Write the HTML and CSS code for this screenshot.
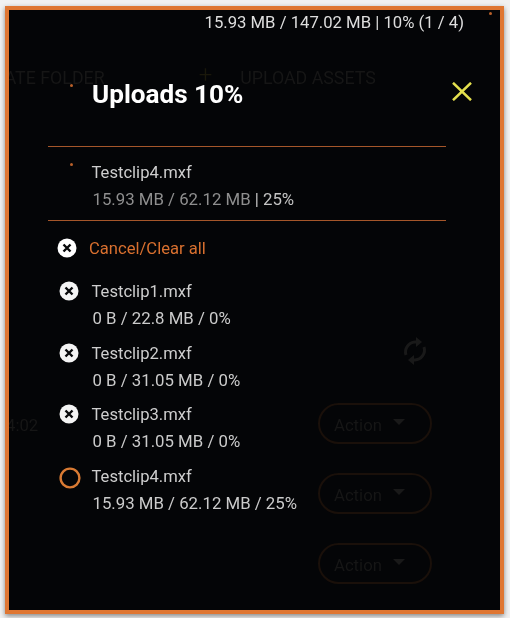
FILE: index.html
```html
<!DOCTYPE html>
<html lang="en">
<head>
<meta charset="utf-8">
<title>Uploads</title>
<link rel="stylesheet" href="styles.css">
</head>
<body>
<div class="frame">
  <div class="backdrop">
    <div class="bd-toolbar">
      <span class="bd-folder">CREATE FOLDER</span>
      <span class="bd-plus">+</span>
      <span class="bd-upload">UPLOAD ASSETS</span>
    </div>
    <div class="bd-refresh">
      <svg width="26" height="30" viewBox="0 0 26 30" fill="none" stroke="#191919" stroke-width="3">
        <path d="M4 19a10 10 0 0 1 9-13h3"/><path d="M22 11a10 10 0 0 1-9 13h-3"/>
        <path d="M14 1l6 5-6 5z" fill="#191919" stroke="none"/><path d="M12 19l-6 5 6 5z" fill="#191919" stroke="none"/>
      </svg>
    </div>
    <div class="bd-row"><span class="bd-time">4:02</span><span class="bd-action">Action<i class="bd-caret"></i></span></div>
    <div class="bd-row"><span class="bd-time"></span><span class="bd-action">Action<i class="bd-caret"></i></span></div>
    <div class="bd-row"><span class="bd-time"></span><span class="bd-action">Action<i class="bd-caret"></i></span></div>
  </div>

  <div class="overlay">
    <div class="status">15.93 MB / 147.02 MB | 10% (1 / 4)</div>
    <div class="header">
      <h1 class="title">Uploads 10%</h1>
      <svg class="close" width="20" height="19" viewBox="0 0 20 19" fill="none" stroke="#e4e04e" stroke-width="2.5">
        <path d="M1 .8l18 17.4M19 .8L1 18.2"/>
      </svg>
    </div>
    <div class="panel">
      <div class="current">
        <div class="name">Testclip4.mxf</div>
        <div class="sub dim">15.93 MB / 62.12 MB <span class="bright">| 25%</span></div>
      </div>
      <div class="cancel">
        <svg class="x-icon" width="20" height="20" viewBox="0 0 20 20"><circle cx="10" cy="10" r="9.5" fill="#fff"/><path d="M6.5 6.5l7 7M13.5 6.5l-7 7" stroke="#08090b" stroke-width="2.4"/></svg>
        <span class="cancel-text">Cancel/Clear all</span>
      </div>
      <div class="list">
        <div class="row">
          <svg class="row-icon" width="20" height="20" viewBox="0 0 20 20"><circle cx="10" cy="10" r="9.5" fill="#f4f4f4"/><path d="M6.5 6.5l7 7M13.5 6.5l-7 7" stroke="#08090b" stroke-width="2.4"/></svg>
          <div><div class="name">Testclip1.mxf</div><div class="sub">0 B / 22.8 MB / 0%</div></div>
        </div>
        <div class="row">
          <svg class="row-icon" width="20" height="20" viewBox="0 0 20 20"><circle cx="10" cy="10" r="9.5" fill="#f4f4f4"/><path d="M6.5 6.5l7 7M13.5 6.5l-7 7" stroke="#08090b" stroke-width="2.4"/></svg>
          <div><div class="name">Testclip2.mxf</div><div class="sub">0 B / 31.05 MB / 0%</div></div>
        </div>
        <div class="row">
          <svg class="row-icon" width="20" height="20" viewBox="0 0 20 20"><circle cx="10" cy="10" r="9.5" fill="#f4f4f4"/><path d="M6.5 6.5l7 7M13.5 6.5l-7 7" stroke="#08090b" stroke-width="2.4"/></svg>
          <div><div class="name">Testclip3.mxf</div><div class="sub">0 B / 31.05 MB / 0%</div></div>
        </div>
        <div class="row">
          <svg class="row-icon ring" width="22" height="22" viewBox="0 0 22 22"><circle cx="11" cy="11" r="9.4" fill="none" stroke="#d97a33" stroke-width="2.4"/></svg>
          <div><div class="name">Testclip4.mxf</div><div class="sub">15.93 MB / 62.12 MB / 25%</div></div>
        </div>
      </div>
    </div>
    <i class="dot dot-a"></i>
    <i class="dot dot-b"></i>
    <i class="dot dot-c"></i>
  </div>
</div>
</body>
</html>
```
FILE: styles.css
```css
* { box-sizing: border-box; }
html, body { margin: 0; padding: 0; }
body {
  width: 510px;
  height: 618px;
  overflow: hidden;
  background: #f1f1f1;
  font-family: Roboto, "Liberation Sans", sans-serif;
  padding: 6px 0 0 5px;
}
.frame {
  position: relative;
  width: 499px;
  height: 608px;
  border: 4px solid #df7632;
  background: #040507;
  box-shadow: 0 2px 5px rgba(0, 0, 0, .45);
  overflow: hidden;
  filter: blur(.4px);
}

/* dimmed page behind the dialog */
.backdrop { color: #161616; font-size: 16.7px; height: 100%; }
.bd-toolbar {
  display: flex;
  align-items: center;
  height: 24px;
  margin: 55px 0 0 -37px;
  white-space: nowrap;
  font-size: 17.8px;
}
.bd-plus { margin-left: 94px; font-size: 24px; font-weight: 300; color: #1a180b; position: relative; top: -2px; }
.bd-upload { margin-left: 28px; }
.bd-refresh { display: flex; justify-content: flex-end; margin: 247px 72px 0 0; height: 30px; }
.bd-row {
  display: flex;
  justify-content: space-between;
  align-items: center;
  height: 41px;
  margin-bottom: 29px;
  padding-right: 68px;
}
.bd-refresh + .bd-row { margin-top: 37px; }
.bd-time { margin: 4px 0 0 -3px; }
.bd-action {
  display: flex;
  align-items: center;
  width: 114px;
  height: 41px;
  padding: 4px 0 0 14px;
  border: 2px solid #1a100a;
  border-radius: 21px;
}
.bd-caret {
  width: 0;
  height: 0;
  margin: -7px 0 0 11px;
  border: 6px solid transparent;
  border-top: 6px solid #191919;
  border-bottom: 0;
}

/* upload dialog */
.overlay { position: absolute; inset: 0; color: #cecece; }
.status {
  height: 26px;
  line-height: 26px;
  padding-right: 36px;
  text-align: right;
  font-size: 16.7px;
  color: #dedede;
}
.header {
  display: flex;
  justify-content: space-between;
  align-items: center;
  width: 424px;
  height: 48px;
  margin: 34px 0 0 39px;
  padding-left: 44px;
}
.close { margin-top: -5px; }
.title { margin: 0; font-size: 26.1px; line-height: 48px; font-weight: 700; color: #fff; }
.panel { width: 398px; margin: 28px 0 0 39px; }
.current {
  border-top: 1px solid #a5562a;
  border-bottom: 1px solid #a5562a;
  padding: 13px 0 8px 43.5px;
}
.name { height: 26px; line-height: 26px; font-size: 16.6px; }
.sub { height: 26px; line-height: 26px; font-size: 16.8px; padding-left: 1px; color: #cbcbcb; }
.dim { color: #8f8f8f; }
.bright { color: #c4c4c4; }
.cancel {
  display: flex;
  align-items: center;
  height: 26px;
  margin-top: 14px;
  padding-left: 9px;
  gap: 12px;
}
.cancel-text { font-size: 16.6px; color: #d9702f; }
.list { display: flex; flex-direction: column; gap: 9.5px; margin-top: 18px; }
.row { display: flex; align-items: flex-start; padding-left: 10.5px; }
.row-icon { flex: none; margin: 2px 13px 0 0; }
.ring { margin: 3px 10.5px 0 .5px; }
.dot { position: absolute; width: 3px; height: 3px; background: #b8602a; border-radius: 50%; }
.dot-a { left: 61px; top: 74px; }
.dot-b { left: 61px; top: 153px; }
.dot-c { left: 480px; top: 2px; }
```
